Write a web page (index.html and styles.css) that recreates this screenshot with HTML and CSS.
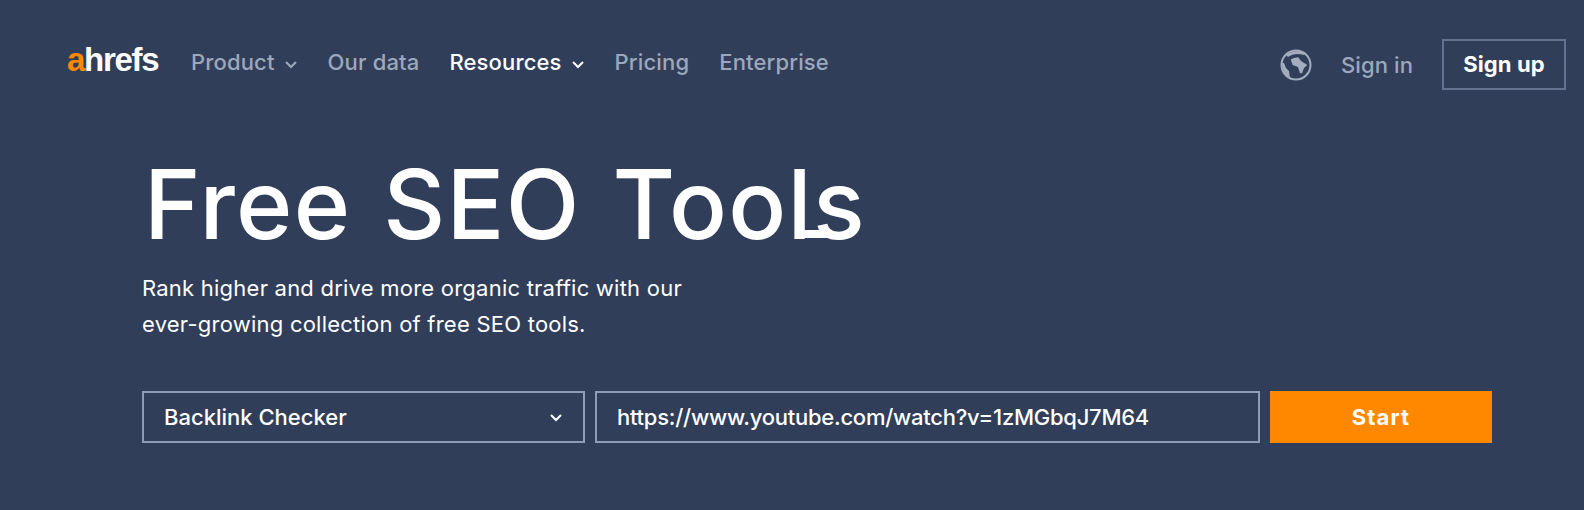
FILE: index.html
```html
<!DOCTYPE html>
<html lang="en">
<head>
  <meta charset="UTF-8" />
  <title>Free SEO Tools</title>
  <link rel="stylesheet" href="styles.css">
</head>
<body>
  <div class="header">
    <div class="logo"><span class="logo-a">a</span>hrefs</div>
    <div class="nav">
      <a>Product <svg class="chev" viewBox="0 0 14 9"><path d="M2 2l5 5 5-5"/></svg></a>
      <a>Our data</a>
      <a class="active">Resources <svg class="chev" viewBox="0 0 14 9"><path d="M2 2l5 5 5-5"/></svg></a>
      <a>Pricing</a>
      <a>Enterprise</a>
    </div>
    <div class="header-right">
      <svg class="globe" viewBox="0 0 32 32">
        <circle cx="16" cy="16" r="14.500"/>
        <path class="land" d="M6 6c5-4 14-5 20-2l-2 2c-6-2-12-1-16 2z"/>
        <path class="land" d="M10.700 10.500 14 9l4.300-.7L21 12l6.300 4-3.300 3-2 5.300-2 0-2-6.300-5.300-2z"/>
        <path class="land" d="M2 14l2 0 2 5 3 3 1 7C5 27 2 21 2 14z"/>
      </svg>
      <a class="signin">Sign in</a>
      <a class="signup">Sign up</a>
    </div>
  </div>

  <div class="hero">
    <h1>Free SEO Too<span class="hook">l</span>s</h1>
    <p>Rank higher and drive more organic traffic with our<br>ever-growing collection of free SEO tools.</p>
    <div class="tool-form">
      <div class="tool-select">Backlink Checker <svg class="chev" viewBox="0 0 14 9"><path d="M2 2l5 5 5-5"/></svg></div>
      <div class="tool-input">https://www.youtube.com/watch?v=1zMGbqJ7M64</div>
      <button class="btn">Start</button>
    </div>
  </div>
</body>
</html>
```

FILE: styles.css
```css
body {
  margin: 0;
  height: 510px;
  overflow: hidden;
  background: #313e59;
  color: #fff;
  font-family: 'Inter', sans-serif;
}
.header {
  display: flex;
  align-items: center;
  padding: 39px 18px 0 67px;
  height: 51px;
}
.logo {
  font-family: 'Liberation Sans', sans-serif;
  font-size: 33px;
  font-weight: bold;
  letter-spacing: -1.300px;
  width: 124px;
  margin-top: -10px;
}
.logo-a {
  color: #ff8800;
}
.nav {
  display: flex;
  gap: 30px;
  font-size: 22px;
  font-weight: 500;
  letter-spacing: 0.150px;
  margin-top: -5px;
  color: #9ca8bd;
}
.nav .active {
  color: #fff;
}
.chev {
  width: 14px;
  height: 9px;
  margin-left: 3px;
  vertical-align: 1px;
  fill: none;
  stroke: currentColor;
  stroke-width: 2;
}
.header-right {
  display: flex;
  align-items: center;
  margin-left: auto;
  font-size: 22px;
  font-weight: 500;
}
.globe {
  width: 32px;
  height: 32px;
  margin-right: 29px;
  fill: none;
  stroke: #a3adc0;
  stroke-width: 2;
}
.globe .land {
  fill: #a3adc0;
  stroke: none;
}
.signin {
  color: #9ca8bd;
  letter-spacing: 0.100px;
  margin-right: 29px;
}
.signup {
  box-sizing: border-box;
  width: 124px;
  height: 51px;
  line-height: 47px;
  text-align: center;
  font-weight: bold;
  letter-spacing: 0.100px;
  border: 2px solid #65728f;
}
.hero {
  padding: 56px 92px 0 142px;
}
.hero h1 {
  margin: 0 0 0 2px;
  font-size: 96px;
  line-height: 116px;
  font-weight: 500;
  letter-spacing: 1.300px;
  word-spacing: 5px;
}
.hook {
  position: relative;
}
.hook::after {
  content: "";
  position: absolute;
  left: 7px;
  bottom: 24px;
  width: 34px;
  height: 8px;
  background: #fff;
  border-bottom-left-radius: 8px;
}
.hero p {
  margin: 8px 0 0;
  font-size: 22px;
  line-height: 36px;
  letter-spacing: 0.230px;
}
.tool-form {
  display: flex;
  gap: 10px;
  margin-top: 49px;
  height: 52px;
  font-size: 22px;
  font-weight: 500;
}
.tool-select, .tool-input {
  box-sizing: border-box;
  display: flex;
  align-items: center;
  padding: 0 20px;
  border: 2px solid #8e9cb8;
}
.tool-select {
  width: 443px;
  justify-content: space-between;
}
.tool-input {
  flex: 1;
  letter-spacing: -0.250px;
}
.btn {
  width: 222px;
  background: #ff8800;
  color: #fff;
  border: none;
  font-family: 'Inter', sans-serif;
  font-size: 22px;
  font-weight: bold;
  letter-spacing: 1.100px;
}
```
